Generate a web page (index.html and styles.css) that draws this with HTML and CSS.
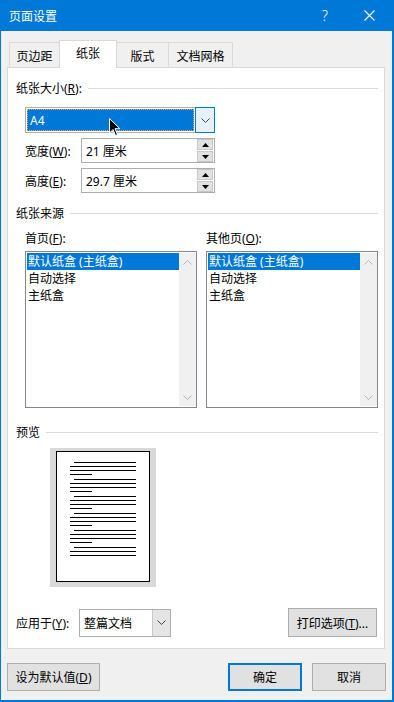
FILE: index.html
```html
<!DOCTYPE html>
<html lang="zh-CN">
<head>
    <meta charset="UTF-8">
    <title>页面设置</title>
    <link rel="stylesheet" href="styles.css">
</head>
<body>
<div class="janela">

    <div class="titulo">
        <span class="titulo-texto">页面设置</span>
        <span class="ajuda">?</span>
        <svg class="fechar" width="11" height="11" viewBox="0 0 11 11">
            <path d="M0.5 0.5 L10.5 10.5 M10.5 0.5 L0.5 10.5" stroke="#fff" stroke-width="1.1" fill="none"/>
        </svg>
    </div>

    <div class="abas">
        <div class="aba">页边距</div>
        <div class="aba ativa">纸张</div>
        <div class="aba">版式</div>
        <div class="aba">文档网格</div>
    </div>

    <div class="painel">

        <div class="grupo grupo-1"><span>纸张大小(<u>R</u>):</span><i></i></div>

        <div class="combo">
            <div class="combo-valor"><span>A4</span></div>
            <div class="combo-botao">
                <svg width="9" height="5" viewBox="0 0 9 5"><path d="M0.5 0.5 L4.5 4.5 L8.5 0.5" stroke="#444" fill="none"/></svg>
            </div>
            <svg class="cursor" width="12" height="19" viewBox="0 0 12 19">
                <path d="M0.5 0.5 L0.5 15 L4 11.5 L6.5 17.5 L8.5 16.6 L6 10.7 L10.8 10.7 Z" fill="#000" stroke="#fff" stroke-width="1"/>
            </svg>
        </div>

        <div class="linha-medida">
            <label>宽度(<u>W</u>):</label>
            <div class="spin">
                <span>21 厘米</span>
                <div class="spin-botoes">
                    <div class="seta"><svg width="7" height="4" viewBox="0 0 7 4"><path d="M3.5 0 L7 4 L0 4 Z" fill="#000"/></svg></div>
                    <div class="seta"><svg width="7" height="4" viewBox="0 0 7 4"><path d="M0 0 L7 0 L3.5 4 Z" fill="#000"/></svg></div>
                </div>
            </div>
        </div>

        <div class="linha-medida">
            <label>高度(<u>E</u>):</label>
            <div class="spin">
                <span>29.7 厘米</span>
                <div class="spin-botoes">
                    <div class="seta"><svg width="7" height="4" viewBox="0 0 7 4"><path d="M3.5 0 L7 4 L0 4 Z" fill="#000"/></svg></div>
                    <div class="seta"><svg width="7" height="4" viewBox="0 0 7 4"><path d="M0 0 L7 0 L3.5 4 Z" fill="#000"/></svg></div>
                </div>
            </div>
        </div>

        <div class="grupo grupo-2"><span>纸张来源</span><i></i></div>

        <div class="fontes">
            <div class="fonte">
                <label>首页(<u>F</u>):</label>
                <div class="lista">
                    <div class="itens">
                        <div class="item sel">默认纸盒 (主纸盒)</div>
                        <div class="item">自动选择</div>
                        <div class="item">主纸盒</div>
                    </div>
                    <div class="rolagem">
                        <svg width="9" height="5" viewBox="0 0 9 5"><path d="M0.5 4.5 L4.5 0.5 L8.5 4.5" stroke="#b4b4b4" fill="none"/></svg>
                        <svg width="9" height="5" viewBox="0 0 9 5"><path d="M0.5 0.5 L4.5 4.5 L8.5 0.5" stroke="#b4b4b4" fill="none"/></svg>
                    </div>
                </div>
            </div>
            <div class="fonte">
                <label>其他页(<u>O</u>):</label>
                <div class="lista">
                    <div class="itens">
                        <div class="item sel">默认纸盒 (主纸盒)</div>
                        <div class="item">自动选择</div>
                        <div class="item">主纸盒</div>
                    </div>
                    <div class="rolagem">
                        <svg width="9" height="5" viewBox="0 0 9 5"><path d="M0.5 4.5 L4.5 0.5 L8.5 4.5" stroke="#b4b4b4" fill="none"/></svg>
                        <svg width="9" height="5" viewBox="0 0 9 5"><path d="M0.5 0.5 L4.5 4.5 L8.5 0.5" stroke="#b4b4b4" fill="none"/></svg>
                    </div>
                </div>
            </div>
        </div>

        <div class="grupo grupo-3"><span>预览</span><i></i></div>

        <div class="previa">
            <div class="folha">
                <div class="paragrafo"><b class="l1"></b><b></b><b></b><b class="curta"></b></div>
                <div class="paragrafo"><b class="l1"></b><b></b><b></b><b class="curta"></b></div>
                <div class="paragrafo"><b class="l1"></b><b></b><b></b><b class="curta"></b></div>
                <div class="paragrafo"><b class="l1"></b><b></b><b></b><b class="curta"></b></div>
                <div class="paragrafo"><b class="l1"></b><b></b><b></b><b class="curta"></b></div>
                <div class="paragrafo"><b class="l1"></b><b></b><b></b></div>
            </div>
        </div>

        <div class="aplicar">
            <label>应用于(<u>Y</u>):</label>
            <div class="select">
                <span>整篇文档</span>
                <div class="select-botao">
                    <svg width="9" height="5" viewBox="0 0 9 5"><path d="M0.5 0.5 L4.5 4.5 L8.5 0.5" stroke="#444" fill="none"/></svg>
                </div>
            </div>
            <button class="btn btn-imprimir">打印选项(<u>T</u>)...</button>
        </div>

    </div>

    <div class="rodape">
        <button class="btn btn-padrao">设为默认值(<u>D</u>)</button>
        <button class="btn btn-ok">确定</button>
        <button class="btn btn-cancelar">取消</button>
    </div>

</div>
</body>
</html>
```

FILE: styles.css
```css
html, body {
    margin: 0;
    padding: 0;
}
body {
    font-family: "Noto Sans", "Noto Sans CJK SC", sans-serif;
    font-size: 12px;
    color: #000;
    width: 394px;
    height: 702px;
    overflow: hidden;
}
u {
    text-decoration: underline;
    text-underline-offset: 1px;
}
.janela {
    width: 394px;
    height: 702px;
    box-sizing: border-box;
    border-left: 1px solid #0078d7;
    border-right: 2px solid #0078d7;
    border-bottom: 2px solid #0078d7;
    background-color: #f0f0f0;
    display: flex;
    flex-direction: column;
}

/* barra de titulo */
.titulo {
    height: 31px;
    background-color: #0078d7;
    color: white;
    display: flex;
    align-items: center;
    padding-left: 8px;
    flex-shrink: 0;
}
.titulo-texto {
    flex: 1;
    font-size: 12px;
}
.ajuda {
    font-family: "Noto Sans", sans-serif;
    font-size: 14px;
    font-weight: 300;
    margin-right: 36px;
}
.fechar {
    margin-right: 17px;
}

/* abas */
.abas {
    display: flex;
    align-items: flex-end;
    height: 27px;
    margin-top: 9px;
    padding-left: 8px;
    flex-shrink: 0;
}
.aba {
    height: 25px;
    box-sizing: border-box;
    border: 1px solid #d9d9d9;
    border-bottom: none;
    margin-right: -1px;
    padding: 2px 0 0;
    display: flex;
    align-items: center;
    justify-content: center;
    white-space: nowrap;
}
.aba:nth-child(1) { width: 51px; }
.aba:nth-child(3) { width: 53px; }
.aba:nth-child(4) { width: 65px; }
.aba.ativa {
    width: 58px;
    height: 28px;
    background: white;
    margin-bottom: -1px;
    position: relative;
    z-index: 1;
    padding: 0 0 3px;
}

/* painel */
.painel {
    height: 582px;
    box-sizing: border-box;
    margin: 0 7px 0 6px;
    border: 1px solid #d9d9d9;
    background: white;
    padding: 0 6px 0 8px;
    flex-shrink: 0;
}
.grupo {
    display: flex;
    align-items: center;
    height: 16px;
}
.grupo i {
    flex: 1;
    height: 1px;
    background: #dcdcdc;
    margin-left: 6px;
}
.grupo-1 { margin-top: 12px; }
.grupo-2 { margin-top: 12px; }
.grupo-3 { margin-top: 16px; }

.combo {
    width: 190px;
    height: 26px;
    box-sizing: border-box;
    margin: 11px 0 0 9px;
    border: 1px solid #adadad;
    display: flex;
    position: relative;
}
.combo-valor {
    flex: 1;
    padding: 1px;
}
.combo-valor span {
    display: flex;
    align-items: center;
    height: 100%;
    box-sizing: border-box;
    background: #0078d7;
    color: white;
    border: 1px dotted #f0a050;
    padding-left: 2px;
}
.combo-botao {
    width: 18px;
    margin: -1px -1px -1px 0;
    border: 1px solid #0078d7;
    background: #e5f1fb;
    display: flex;
    align-items: center;
    justify-content: center;
}
.cursor {
    position: absolute;
    left: 83px;
    top: 10px;
}

.linha-medida {
    display: flex;
    align-items: center;
    margin-top: 5px;
    margin-left: 9px;
    height: 25px;
}
.linha-medida label {
    width: 56px;
}
.spin {
    width: 134px;
    height: 25px;
    box-sizing: border-box;
    border: 1px solid #adadad;
    display: flex;
    align-items: center;
    padding-left: 4px;
}
.spin span {
    flex: 1;
}
.spin-botoes {
    width: 16px;
    height: 23px;
    display: flex;
    flex-direction: column;
    justify-content: center;
    gap: 1px;
    margin-right: 1px;
}
.seta {
    height: 10px;
    background: #e1e1e1;
    border: 1px solid #c8c8c8;
    display: flex;
    align-items: center;
    justify-content: center;
}

.fontes {
    display: flex;
    gap: 9px;
    margin-left: 9px;
    margin-top: 10px;
}
.fonte label {
    display: block;
    height: 16px;
    line-height: 16px;
    margin-bottom: 4px;
}
.lista {
    width: 172px;
    height: 157px;
    box-sizing: border-box;
    border: 1px solid #828790;
    display: flex;
    padding: 1px 0 1px 1px;
}
.itens {
    flex: 1;
}
.item {
    height: 17px;
    line-height: 17px;
    padding-left: 1px;
}
.item.sel {
    background: #0078d7;
    color: white;
}
.rolagem {
    width: 17px;
    background: #f0f0f0;
    display: flex;
    flex-direction: column;
    justify-content: space-between;
    align-items: center;
    padding: 7px 0 6px;
    box-sizing: border-box;
}

.previa {
    width: 106px;
    height: 139px;
    box-sizing: border-box;
    background: #d9d9d9;
    margin: 8px 0 0 34px;
    padding: 3px 6px 5px;
}
.folha {
    height: 131px;
    box-sizing: border-box;
    border: 1px solid #000;
    background: white;
    padding: 10px 0 0 13px;
}
.paragrafo {
    margin-bottom: 4px;
}
.paragrafo b {
    display: block;
    width: 66px;
    height: 1px;
    background: #000;
    margin-bottom: 3px;
}
.paragrafo b.l1 {
    width: 62px;
    margin-left: 4px;
}
.paragrafo b.curta {
    width: 22px;
}

.aplicar {
    display: flex;
    align-items: center;
    margin-top: 21px;
    height: 29px;
}
.aplicar label {
    width: 63px;
}
.select {
    width: 92px;
    height: 28px;
    box-sizing: border-box;
    border: 1px solid #adadad;
    display: flex;
    align-items: center;
    padding-left: 4px;
}
.select span {
    flex: 1;
}
.select-botao {
    width: 17px;
    height: 100%;
    background: #e5e5e5;
    border-left: 1px solid #c8c8c8;
    display: flex;
    align-items: center;
    justify-content: center;
}
.btn {
    font-family: "Noto Sans", "Noto Sans CJK SC", sans-serif;
    font-size: 12px;
    color: #000;
    background: #e1e1e1;
    border: 1px solid #adadad;
    height: 28px;
    padding: 0;
    margin: 0;
}
.btn-imprimir {
    width: 89px;
    height: 29px;
    margin-left: auto;
    margin-right: 1px;
}

/* botoes de baixo */
.rodape {
    display: flex;
    margin-top: 14px;
    padding: 0 6px;
}
.btn-padrao {
    width: 93px;
}
.btn-ok {
    width: 74px;
    margin-left: auto;
    border: 2px solid #0078d7;
}
.btn-cancelar {
    width: 74px;
    margin-left: 10px;
}
```
